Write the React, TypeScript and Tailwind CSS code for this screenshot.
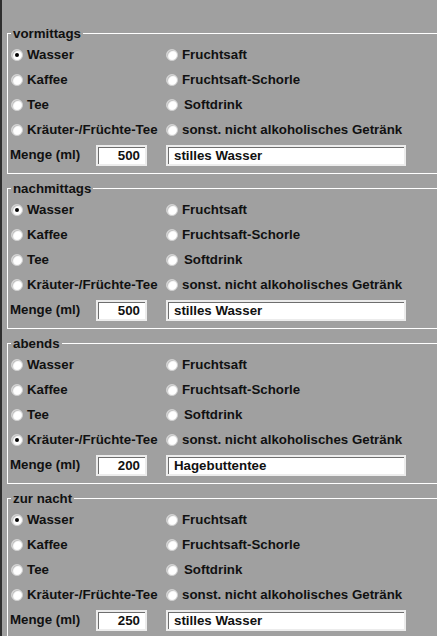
import React from "react";

type Group = {
  title: string;
  selected: string;
  amount: string;
  note: string;
};

const groups: Group[] = [
  { title: "vormittags", selected: "Wasser", amount: "500", note: "stilles Wasser" },
  { title: "nachmittags", selected: "Wasser", amount: "500", note: "stilles Wasser" },
  { title: "abends", selected: "Kräuter-/Früchte-Tee", amount: "200", note: "Hagebuttentee" },
  { title: "zur nacht", selected: "Wasser", amount: "250", note: "stilles Wasser" },
];

// pairs per row: left column, right column
const rows = [
  ["Wasser", "Fruchtsaft"],
  ["Kaffee", "Fruchtsaft-Schorle"],
  ["Tee", "Softdrink"],
  ["Kräuter-/Früchte-Tee", "sonst. nicht alkoholisches Getränk"],
];

function Radio({ label, checked }: { label: string; checked: boolean }) {
  return (
    <label className="flex items-center gap-[4px] whitespace-nowrap">
      <span className="w-[12px] h-[12px] rounded-full bg-white border border-[#cfcfcf] shadow-[inset_1px_1px_1px_#bdbdbd] flex items-center justify-center shrink-0">
        {checked && <span className="w-[4px] h-[4px] rounded-full bg-black" />}
      </span>
      <span className={label === "Softdrink" ? "ml-[2px]" : ""}>{label}</span>
    </label>
  );
}

function Box({ group }: { group: Group }) {
  return (
    <fieldset className="border border-white border-r-0 w-[470px] mb-[7px] pb-[5px]">
      <legend className="ml-[3px] px-[2px] leading-[15px]">{group.title}</legend>
      <div className="pl-[3px] pt-[1px]">
        {rows.map(([a, b]) => (
          <div key={a} className="flex items-center h-[25px]">
            <div className="w-[155px]">
              <Radio label={a} checked={group.selected === a} />
            </div>
            <Radio label={b} checked={group.selected === b} />
          </div>
        ))}
      </div>
      <div className="flex items-center h-[26px] pl-[2px]">
        <span className="w-[86px]">Menge (ml)</span>
        <div className="w-[51px] h-[21px] border-2 border-[#ececec] shadow-[inset_1px_1px_0_#6e6e6e] bg-white text-right pr-[5px] leading-[17px]">
          {group.amount}
        </div>
        <div className="ml-[19px] w-[240px] h-[21px] border-2 border-[#ececec] shadow-[inset_1px_1px_0_#6e6e6e] bg-white pl-[6px] leading-[17px]">
          {group.note}
        </div>
      </div>
    </fieldset>
  );
}

export default function App() {
  return (
    <div
      className="w-[437px] h-[636px] overflow-hidden bg-[#a0a0a0] flex text-[13.3px] font-bold text-[#111]"
      style={{ fontFamily: '"Liberation Sans", Arial, sans-serif' }}
    >
      <div className="w-[2px] shrink-0 bg-[#2e2e2e]" />
      <div className="pl-[5px] pt-[26px]">
        {groups.map((g) => (
          <Box key={g.title} group={g} />
        ))}
      </div>
    </div>
  );
}
